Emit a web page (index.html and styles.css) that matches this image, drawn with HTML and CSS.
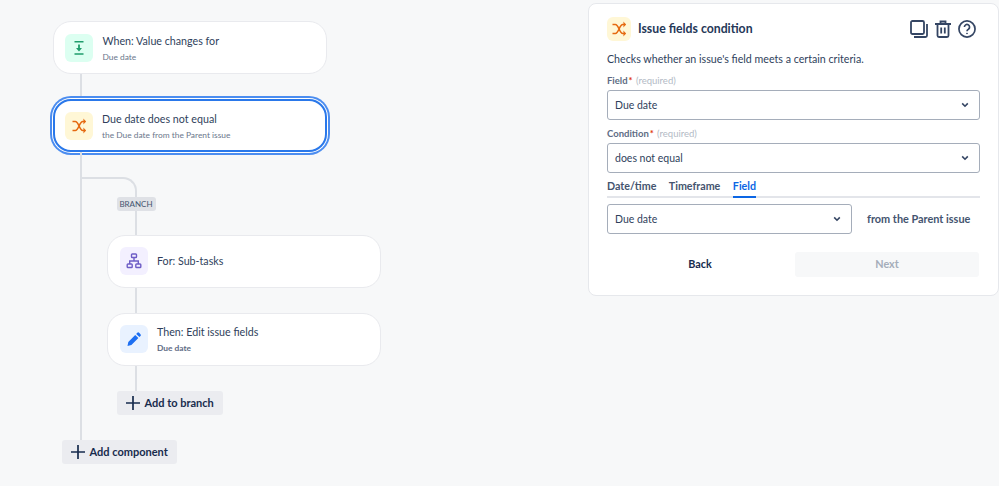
FILE: index.html
```html
<!DOCTYPE html>
<html lang="en">
<head>
<meta charset="utf-8">
<title>Issue fields condition</title>
<link rel="stylesheet" href="styles.css">
</head>
<body>
<div class="page">
  <main class="flow">
    <div class="card">
      <span class="tile tile-green">
        <svg width="24" height="24" viewBox="0 0 24 24" fill="none"><path d="M7.500 5.800h9M7.500 18h9" stroke="#1f9d6c" stroke-width="1.600"/><path d="M12 8.500v5" stroke="#1f9d6c" stroke-width="1.800"/><path d="M9 12h6l-3 3.600z" fill="#1f9d6c"/></svg>
      </span>
      <div class="card-text"><div class="card-title">When: Value changes for</div><div class="card-sub">Due date</div></div>
    </div>
    <div class="conn conn-main"></div>
    <div class="card card-selected">
      <span class="tile tile-yellow">
        <svg width="24" height="24" viewBox="0 0 24 24" fill="none" stroke="#e56910" stroke-width="1.600"><path d="M5.500 7.500h2.800c3.500 0 4 9 7.500 9h2.200M5.500 16.500h2.800c3.500 0 4-9 7.500-9h2.200"/><path d="M16.500 5.300 18.800 7.500l-2.300 2.200M16.500 14.300l2.300 2.200-2.300 2.200" fill="#e56910" stroke-width="1"/></svg>
      </span>
      <div class="card-text"><div class="card-title">Due date does not equal</div><div class="card-sub">the Due date from the Parent issue</div></div>
    </div>
    <div class="branch-block">
      <div class="elbow"><span class="badge">BRANCH</span></div>
      <div class="card card-branch">
        <span class="tile tile-purple">
          <svg width="24" height="24" viewBox="0 0 24 24" fill="none" stroke="#6e5dc6" stroke-width="1.400"><rect x="9.500" y="5" width="5" height="3.500" rx="0.800"/><rect x="5.200" y="15" width="5" height="3.500" rx="0.800"/><rect x="13.800" y="15" width="5" height="3.500" rx="0.800"/><path d="M12 8.500v3.500M7.700 15v-3h8.600v3"/></svg>
        </span>
        <div class="card-text"><div class="card-title">For: Sub-tasks</div></div>
      </div>
      <div class="conn conn-branch"></div>
      <div class="card card-branch">
        <span class="tile tile-blue">
          <svg width="24" height="24" viewBox="0 0 24 24"><path d="M15.300 5.800a1.300 1.300 0 0 1 1.800 0l1.400 1.400a1.300 1.300 0 0 1 0 1.800l-1.100 1.100-3.200-3.200zM13.200 7.900l3.200 3.200-7 7-3.900.9.800-4z" fill="#1d6ff2"/></svg>
        </span>
        <div class="card-text"><div class="card-title">Then: Edit issue fields</div><div class="card-sub card-sub-bold">Due date</div></div>
      </div>
      <div class="conn conn-branch"></div>
      <button class="add add-branch" type="button">
        <svg width="16" height="16" viewBox="0 0 16 16"><path d="M8 1v14M1 8h14" stroke="#172b4d" stroke-width="1.700"/></svg>
        Add to branch
      </button>
    </div>
    <button class="add add-main" type="button">
      <svg width="16" height="16" viewBox="0 0 16 16"><path d="M8 1v14M1 8h14" stroke="#172b4d" stroke-width="1.700"/></svg>
      Add component
    </button>
  </main>

  <aside class="panel">
    <header class="panel-head">
      <span class="tile tile-yellow tile-small">
        <svg width="24" height="24" viewBox="0 0 24 24" fill="none" stroke="#e56910" stroke-width="1.600"><path d="M5.500 7.500h2.800c3.500 0 4 9 7.500 9h2.200M5.500 16.500h2.800c3.500 0 4-9 7.500-9h2.200"/><path d="M16.500 5.300 18.800 7.500l-2.300 2.200M16.500 14.300l2.300 2.200-2.300 2.200" fill="#e56910" stroke-width="1"/></svg>
      </span>
      <h1 class="panel-title">Issue fields condition</h1>
      <div class="panel-actions">
        <svg width="18" height="18" viewBox="0 0 18 18" fill="none" stroke="#344563" stroke-width="1.800"><rect x="1" y="1" width="13" height="13" rx="1.500"/><path d="M17 4v11.500a1.500 1.500 0 0 1-1.500 1.500H4"/></svg>
        <svg width="16" height="18" viewBox="0 0 16 18" fill="none" stroke="#344563" stroke-width="1.800"><path d="M0 4h16M5.500 4V1.500h5V4M2.500 4v11.500A1.500 1.500 0 0 0 4 17h8a1.500 1.500 0 0 0 1.500-1.500V4M6.200 7.500v6M9.800 7.500v6"/></svg>
        <svg width="18" height="18" viewBox="0 0 19 19" fill="none" stroke="#344563" stroke-width="1.800"><circle cx="9.500" cy="9.500" r="8.500"/><path d="M6.800 7.500a2.700 2.700 0 1 1 4.200 2.200c-1 .6-1.500 1-1.500 2.100"/><circle cx="9.500" cy="14.200" r="0.500" fill="#344563" stroke-width="1"/></svg>
      </div>
    </header>
    <p class="desc">Checks whether an issue's field meets a certain criteria.</p>
    <div class="label">Field<span class="req">*</span> <span class="hint">(required)</span></div>
    <div class="select">Due date<svg class="chev" width="8" height="6" viewBox="0 0 10 7" fill="none"><path d="M1.500 1.500 5 5l3.500-3.500" stroke="#344563" stroke-width="2"/></svg></div>
    <div class="label label-next">Condition<span class="req">*</span> <span class="hint">(required)</span></div>
    <div class="select">does not equal<svg class="chev" width="8" height="6" viewBox="0 0 10 7" fill="none"><path d="M1.500 1.500 5 5l3.500-3.500" stroke="#344563" stroke-width="2"/></svg></div>
    <nav class="tabs">
      <span class="tab">Date/time</span>
      <span class="tab">Timeframe</span>
      <span class="tab tab-active">Field</span>
    </nav>
    <div class="value-row">
      <div class="select select-short">Due date<svg class="chev" width="8" height="6" viewBox="0 0 10 7" fill="none"><path d="M1.500 1.500 5 5l3.500-3.500" stroke="#344563" stroke-width="2"/></svg></div>
      <span class="from">from the Parent issue</span>
    </div>
    <div class="buttons">
      <button class="btn btn-back" type="button">Back</button>
      <button class="btn btn-next" type="button">Next</button>
    </div>
  </aside>
</div>
</body>
</html>
```

FILE: styles.css
```css
* { box-sizing: border-box; }
html, body { margin: 0; height: 100%; }
body {
  background: #f7f8f9;
  color: #172b4d;
  font-family: Lato, "Noto Sans", sans-serif;
  overflow: hidden;
}
.page { display: flex; align-items: flex-start; height: 486px; }

.flow { width: 588px; flex: none; padding: 21px 0 0 52.500px; display: flex; flex-direction: column; align-items: flex-start; }

.card {
  width: 274px;
  height: 53px;
  background: #fff;
  border: 1.500px solid #e9eaee;
  border-radius: 18px;
  display: flex;
  align-items: center;
  gap: 9.500px;
  padding-left: 11.500px;
}
.card-selected {
  border: 2px solid #2a78ea;
  box-shadow: 0 0 0 1px #fff, 0 0 0 3px #4c8df0;
  padding-left: 10.500px;
  gap: 9px;
}
.card-branch { margin-left: 25.500px; padding-bottom: 1px; }
.tile {
  width: 28px;
  height: 28px;
  border-radius: 6px;
  display: flex;
  align-items: center;
  justify-content: center;
  flex: none;
}
.tile-small { width: 24px; height: 24px; }
.tile-green { background: #dcfff1; }
.tile-yellow { background: #fff7d6; }
.tile-purple { background: #f3f0ff; }
.tile-blue { background: #e9f2ff; }
.card-title { font-size: 10.700px; line-height: 16px; color: #2f3f5c; }
.card-sub { font-size: 8.400px; line-height: 12px; margin-top: 2px; color: #6b778c; }
.card-sub-bold { font-weight: 700; color: #5e6c84; }

.conn { width: 2px; background: #dcdfe4; }
.conn-main { height: 25px; margin-left: 27px; }
.branch-block {
  margin-left: 27px;
  border-left: 2px solid #dcdfe4;
  padding-bottom: 25px;
  padding-top: 25px;
  display: flex;
  flex-direction: column;
  align-items: flex-start;
}
.elbow {
  position: relative;
  width: 55px;
  height: 58px;
  border-top: 2px solid #dcdfe4;
  border-right: 2px solid #dcdfe4;
  border-top-right-radius: 14px;
}
.badge {
  position: absolute;
  top: 18px;
  right: -21px;
  width: 39px;
  height: 14px;
  background: #dfe1e6;
  border-radius: 3px;
  font-size: 8px;
  line-height: 14px;
  text-align: center;
  color: #44546f;
}
.conn-branch { height: 25px; margin-left: 53px; }

.add {
  display: flex;
  align-items: center;
  gap: 4px;
  height: 24px;
  border: 0;
  border-radius: 3px;
  background: #ebecf0;
  color: #172b4d;
  font: 700 11px/1 Lato, "Noto Sans", sans-serif;
  padding: 0 0 1px 8px;
}
.add-branch { width: 106px; margin-left: 35px; }
.add-main { width: 115px; margin-left: 9px; }

.panel {
  width: 411px;
  height: 293px;
  flex: none;
  margin-top: 3px;
  background: #fff;
  border: 1.500px solid #e6e8ec;
  border-radius: 8px;
  padding: 12.500px 18px 0;
}
.panel-head { display: flex; align-items: center; height: 24px; gap: 7px; }
.panel-title { margin: 0; font-size: 12.250px; font-weight: 700; color: #253858; }
.panel-actions { margin-left: auto; display: flex; align-items: center; gap: 7px; margin-right: 4px; }
.desc { margin: 10px 0 0; font-size: 10.670px; line-height: 16px; color: #2f3f5c; }
.label { margin-top: 8px; font-size: 9.500px; line-height: 12px; font-weight: 700; color: #5e6c84; }
.label-next { margin-top: 8px; }
.req { color: #de350b; margin-left: 1px; }
.hint { font-weight: 400; color: #b3bac5; margin-left: 1px; }
.select {
  margin-top: 3px;
  height: 30px;
  border: 1px solid #a5adba;
  border-bottom-width: 1.500px;
  border-radius: 3px;
  background: #fff;
  display: flex;
  align-items: center;
  justify-content: space-between;
  padding: 0 10px 0 7px;
  font-size: 10.500px;
  color: #2f3f5c;
}
.tabs {
  display: flex;
  gap: 12.500px;
  height: 22px;
  margin-top: 3px;
  border-bottom: 2px solid #e3e5ea;
  font-size: 10.700px;
  line-height: 20px;
  color: #44546f;
}
.tab { height: 22px; font-weight: 700; }
.tab-active { color: #0c66e4; border-bottom: 2px solid #0c66e4; }
.value-row { display: flex; align-items: center; margin-top: 6px; }
.value-row .select { margin-top: 0; }
.select-short { width: 245px; }
.from { margin-left: 15px; font-size: 10.900px; font-weight: 700; color: #44546f; }
.buttons { display: flex; gap: 2px; margin-top: 18px; }
.btn {
  width: 184px;
  height: 25px;
  border: 0;
  border-radius: 3px;
  padding-top: 2px;
  font: 700 10.800px/1 Lato, "Noto Sans", sans-serif;
}
.btn-back { background: transparent; color: #172b4d; width: 186px; }
.btn-next { background: #f7f8f9; color: #a5adba; }
```
